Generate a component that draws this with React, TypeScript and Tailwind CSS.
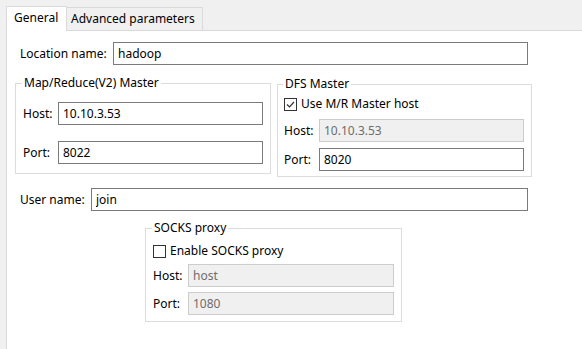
import clsx from 'clsx'

const font = "font-['Noto_Sans',sans-serif]"

function Box({ value, className, disabled }: { value: string; className: string; disabled?: boolean }) {
  return (
    <input
      readOnly
      value={value}
      className={clsx(
        'h-[23px] border px-[4px] text-[12px] outline-none',
        disabled ? 'border-[#cccccc] bg-[#f0f0f0] text-[#6d6d6d]' : 'border-[#7a7a7a] bg-white text-black',
        className,
      )}
    />
  )
}

function Check({ checked, label }: { checked?: boolean; label: string }) {
  return (
    <div className="flex h-[16px] items-center">
      <span className="flex h-[13px] w-[13px] items-center justify-center border border-[#333333] bg-white">
        {checked && (
          <svg width="11" height="11" viewBox="0 0 11 11" fill="none">
            <path d="M2 5.5 L4.5 8 L9 3" stroke="#333333" strokeWidth="1.2" />
          </svg>
        )}
      </span>
      <span className="ml-[4px]">{label}</span>
    </div>
  )
}

export default function App() {
  return (
    <div className={clsx('flex h-[349px] w-[582px] flex-col bg-[#f0f0f0] text-[12px] leading-[16px] text-black', font)}>
      {/* Tab strip */}
      <div className="flex h-[30px] items-end pl-[6px]">
        <div className="relative z-10 -mb-px flex h-[25px] w-[61px] items-center border-x border-t border-[#d9d9d9] bg-white pl-[7px] pb-[2px]">
          General
        </div>
        <div className="flex h-[23px] w-[136px] items-center border-r border-t border-[#d9d9d9] pl-[4px]">
          Advanced parameters
        </div>
      </div>

      {/* Page */}
      <div className="ml-[6px] flex-1 border-l border-t border-[#d9d9d9] bg-white pl-[8px] pt-[11px]">
        <div className="ml-[5px] flex items-center">
          <span className="w-[93px]">Location name:</span>
          <Box value="hadoop" className="w-[415px]" />
        </div>

        <div className="mt-[10px] flex items-start gap-[6px]">
          <fieldset className="w-[256px] border border-[#dcdcdc]">
            <legend className="ml-[6px] px-[2px]">Map/Reduce(V2) Master</legend>
            <div className="pl-[7px] pt-[11px] pb-[9px]">
              <div className="flex items-center">
                <span className="w-[35px]">Host:</span>
                <Box value="10.10.3.53" className="w-[205px]" />
              </div>
              <div className="mt-[16px] flex items-center">
                <span className="w-[35px]">Port:</span>
                <Box value="8022" className="w-[205px]" />
              </div>
            </div>
          </fieldset>

          <fieldset className="mt-px w-[255px] border border-[#dcdcdc]">
            <legend className="ml-[5px] px-[2px]">DFS Master</legend>
            <div className="pl-[6px] pt-[4px] pb-[5px]">
              <Check checked label="Use M/R Master host" />
              <div className="mt-[7px] flex items-center">
                <span className="w-[35px]">Host:</span>
                <Box value="10.10.3.53" disabled className="w-[205px]" />
              </div>
              <div className="mt-[6px] flex items-center">
                <span className="w-[35px]">Port:</span>
                <Box value="8020" className="w-[205px]" />
              </div>
            </div>
          </fieldset>
        </div>

        <div className="ml-[5px] mt-[11px] flex items-center">
          <span className="w-[71px]">User name:</span>
          <Box value="join" className="w-[437px]" />
        </div>

        <fieldset className="ml-[130px] mt-[9px] w-[257px] border border-[#dcdcdc]">
          <legend className="ml-[6px] px-[2px]">SOCKS proxy</legend>
          <div className="pl-[7px] pt-[7px] pb-[6px]">
            <Check label="Enable SOCKS proxy" />
            <div className="mt-[5px] flex items-center">
              <span className="w-[35px]">Host:</span>
              <Box value="host" disabled className="w-[206px]" />
            </div>
            <div className="mt-[5px] flex items-center">
              <span className="w-[35px]">Port:</span>
              <Box value="1080" disabled className="w-[206px]" />
            </div>
          </div>
        </fieldset>
      </div>
    </div>
  )
}
